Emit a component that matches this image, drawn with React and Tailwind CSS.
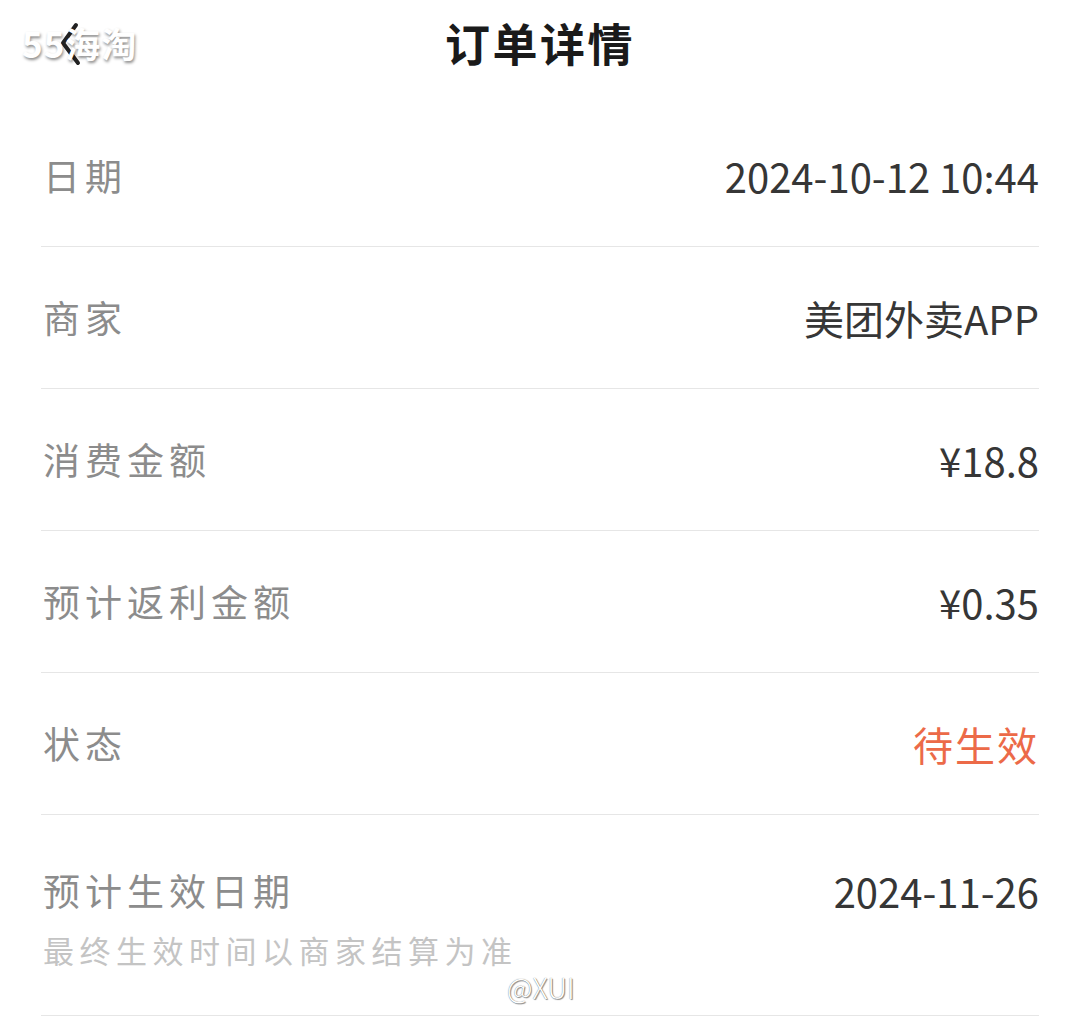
const rows = [
  { label: '日期', value: '2024-10-12 10:44' },
  { label: '商家', value: '美团外卖APP' },
  { label: '消费金额', value: '¥18.8' },
  { label: '预计返利金额', value: '¥0.35' },
  { label: '状态', value: '待生效', accent: true },
];

function Row({ label, value, accent }) {
  return (
    <div className="h-[142px] flex items-center justify-between border-b border-[#e6e6e6]">
      <span className="ml-[2px] text-[37px] tracking-[5px] text-[#8c8c8c]">{label}</span>
      <span className={accent ? 'text-[40px] tracking-[2px] text-[#ec6a48]' : 'text-[40px] text-[#363636]'}>
        {value}
      </span>
    </div>
  );
}

export default function App() {
  return (
    <div
      className="relative w-[1080px] h-[1029px] bg-white overflow-hidden"
      style={{ fontFamily: '"Noto Sans CJK SC", "Noto Sans", sans-serif' }}
    >
      <div className="relative h-[90px] flex items-center justify-center">
        <svg className="absolute left-[58px] top-[22px]" width="26" height="44" viewBox="0 0 26 44">
          <path d="M18 3 L5 21 L20 41" fill="none" stroke="#222" strokeWidth="4" strokeLinecap="round" strokeLinejoin="round" />
        </svg>
        <h1 className="text-[45px] font-bold text-[#1a1a1a] tracking-[2.5px] -mt-[4px]">订单详情</h1>
      </div>

      <div className="mt-[15px] px-[41px]">
        {rows.map((r) => (
          <Row key={r.label} {...r} />
        ))}
        <div className="h-[201px] flex flex-col justify-center border-b border-[#e6e6e6]">
          <div className="flex items-center justify-between">
            <span className="ml-[2px] text-[37px] tracking-[5px] text-[#8c8c8c]">预计生效日期</span>
            <span className="text-[40px] text-[#363636]">2024-11-26</span>
          </div>
          <span className="ml-[2px] mt-[9px] text-[31px] tracking-[5.5px] text-[#c4c4c4] leading-[40px]">最终生效时间以商家结算为准</span>
        </div>
      </div>

      <span
        className="absolute left-[22px] top-[17px] text-[35px] font-bold text-white tracking-[1px]"
        style={{ textShadow: '1px 2px 3px rgba(0,0,0,0.45)' }}
      >
        55海淘
      </span>
      <span
        className="absolute left-[507px] top-[966px] text-[28px] font-light text-white"
        style={{ textShadow: '0 0 1px #666, 1px 1px 1px #888' }}
      >
        @XUI
      </span>
    </div>
  );
}
